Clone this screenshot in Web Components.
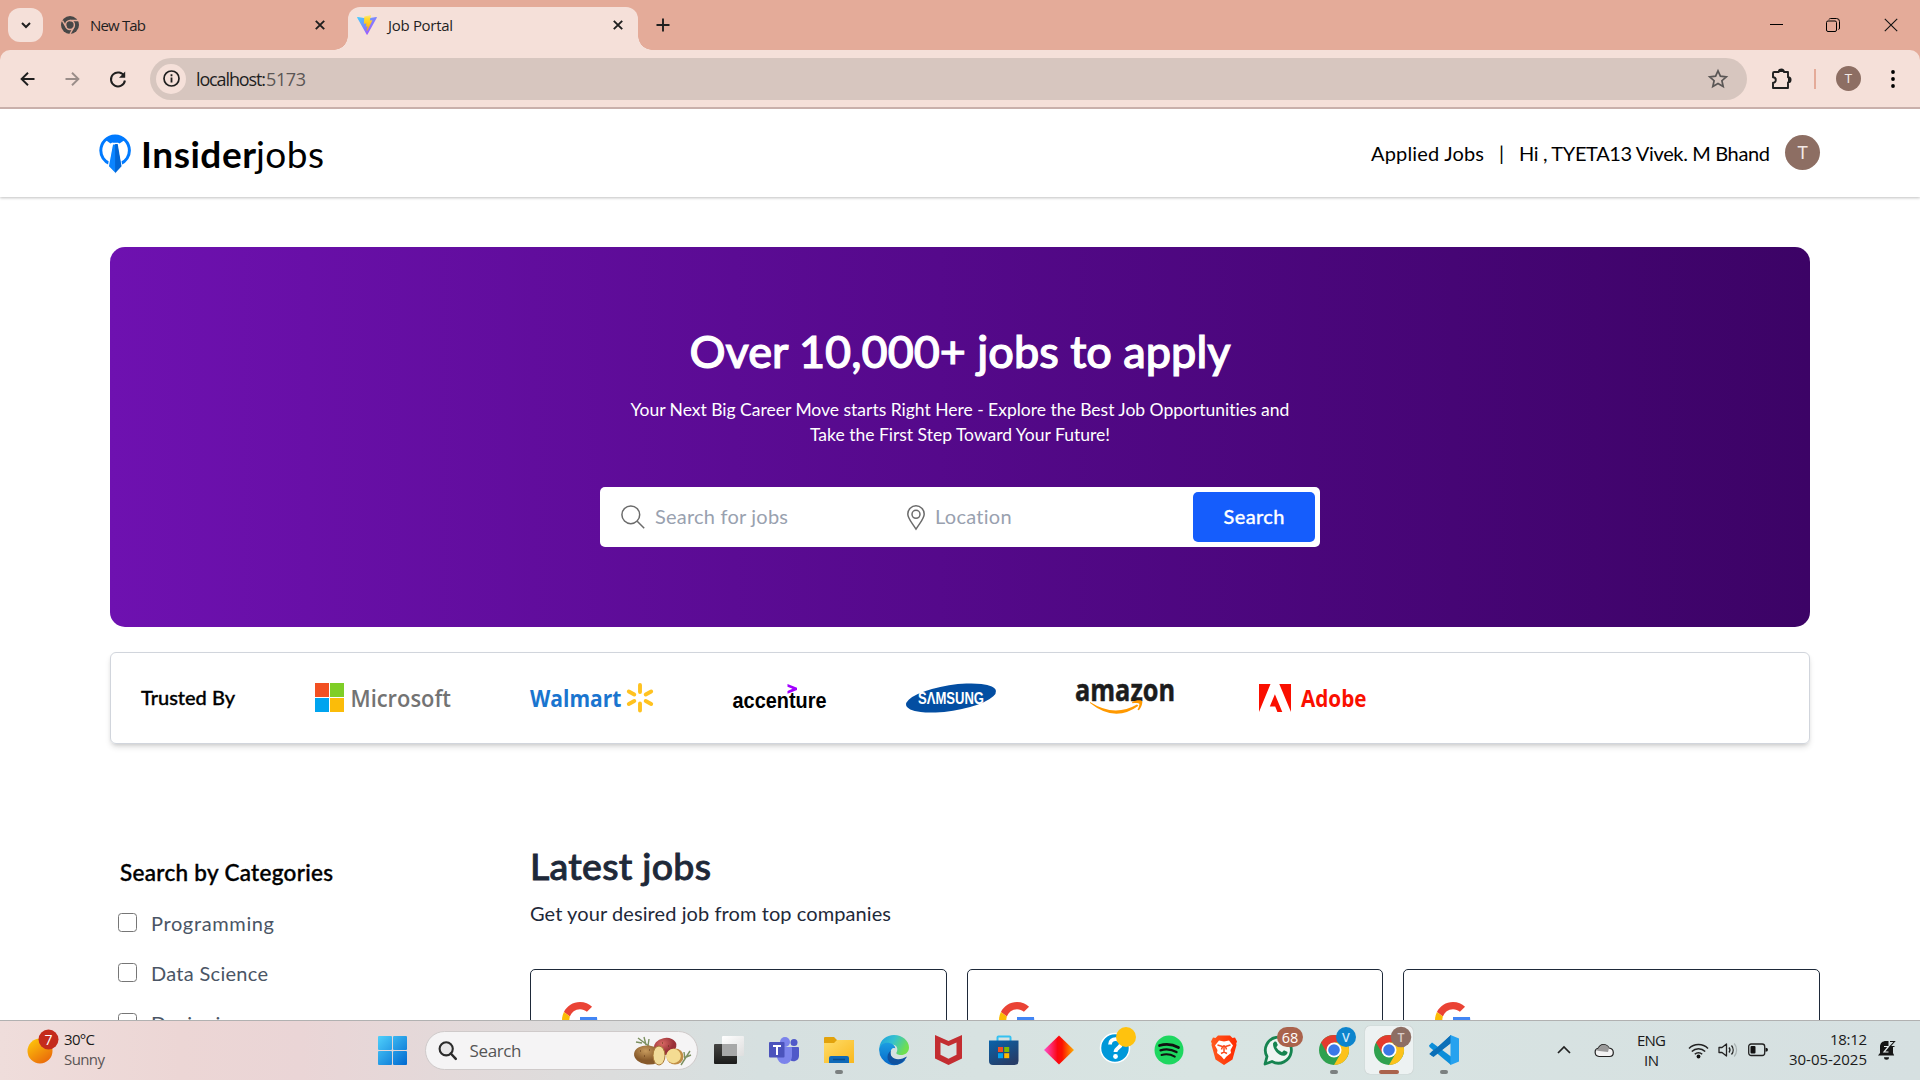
<!DOCTYPE html>
<html lang="en">
<head>
<meta charset="utf-8">
<title>Job Portal</title>
<style>
html,body{margin:0;padding:0}
body{width:1920px;height:1080px;overflow:hidden;display:flex;flex-direction:column;background:#fff;font-family:Lato,"Liberation Sans",sans-serif;font-size:20px;color:#000}
</style>
</head>
<body>
<browser-chrome></browser-chrome>
<portal-page></portal-page>
<task-bar></task-bar>
<script>
const ICONS = {
chevron:[10,6,'<path d="M1 1l4 4 4-4" fill="none" stroke="#1f1f1f" stroke-width="2"/>'],
chromeGrey:[18,18,'<circle cx="9" cy="9" r="9" fill="#474747"/><circle cx="9" cy="9" r="4.4" fill="none" stroke="#e4ab99" stroke-width="1.5"/><path d="M9 4.6h8M5.2 11.2L1.4 4.6M12.8 11.2L9 18" stroke="#e4ab99" stroke-width="1.5"/>'],
x:[10,10,'<path d="M.8.8l8.4 8.4M9.200.8L.8 9.200" stroke="#1f1f1f" stroke-width="1.900"/>'],
vite:[20,20,'<defs><linearGradient id="a" x1="0" y1="0" x2="1" y2="1"><stop offset="0" stop-color="#41d1ff"/><stop offset="1" stop-color="#bd34fe"/></linearGradient><linearGradient id="b" x1="0" y1="0" x2="0" y2="1"><stop offset="0" stop-color="#ffea83"/><stop offset=".2" stop-color="#ffdd35"/><stop offset="1" stop-color="#ffa800"/></linearGradient></defs><path d="M19.800 2.800L10.500 19.500c-.2.350-.7.350-.9 0L.2 2.800c-.2-.4.1-.9.600-.8L10 3.600l9.200-1.600c.5-.1.800.4.600.8z" fill="url(#a)"/><path d="M14 .1L7.500 1.400c-.1 0-.2.1-.2.2l-.4 6.900c0 .2.1.3.300.3l1.900-.4c.2 0 .3.100.3.300l-.6 2.700c0 .2.200.4.300.3l1.200-.4c.2 0 .4.100.3.300l-.9 4.200c0 .3.300.4.400.2l5.200-10.500c.1-.2-.1-.4-.3-.3l-1.900.4c-.2 0-.3-.1-.3-.3L14 .5z" fill="url(#b)"/>'],
plus:[14,14,'<path d="M7 .5v13M.5 7h13" stroke="#1f1f1f" stroke-width="1.900"/>'],
min:[13,14,'<path d="M0 6.500h13" stroke="#000" stroke-width="1"/>'],
restore:[14,14,'<rect x=".5" y="3" width="10" height="10.500" rx="1.500" fill="none" stroke="#000"/><path d="M3 1.500Q3.300.5 4.500.5H10.500Q13.500.5 13.500 3.500V10Q13.500 11.300 12.500 11.500" fill="none" stroke="#000"/>'],
close:[14,14,'<path d="M.8.8l12.400 12.400M13.200.8L.8 13.200" stroke="#111" stroke-width="1.100"/>'],
back:[15,14,'<path d="M14.500 7H1.500M8 .7L1.600 7 8 13.300" fill="none" stroke="#1f1f1f" stroke-width="1.900"/>'],
fwd:[15,14,'<path d="M.5 7h13M7 .7L13.400 7 7 13.300" fill="none" stroke="#9a8d89" stroke-width="1.900"/>'],
reload:[16,16,'<path d="M14.300 5.400A7 7 0 1 0 14.900 9.500" fill="none" stroke="#1f1f1f" stroke-width="2"/><path d="M15.200.5v6.200H9z" fill="#1f1f1f"/>'],
info:[17,17,'<circle cx="8.500" cy="8.500" r="7.500" fill="none" stroke="#1f1f1f" stroke-width="1.700"/><path d="M8.500 7.500v5M8.500 4.300v1.900" stroke="#1f1f1f" stroke-width="1.800"/>'],
star:[20,19,'<path d="M10 1.800l2.400 5.400 5.900.6-4.400 3.900 1.300 5.800L10 14.500l-5.200 3 1.300-5.800L1.700 7.800l5.900-.6z" fill="none" stroke="#5a5655" stroke-width="1.700"/>'],
puzzle:[22,22,'<path d="M3.200 4h4.500a2.600 2.600 0 0 1 5.200 0H17v5.200a2.600 2.600 0 0 1 0 5.200V20H2V14.800a2.800 2.800 0 0 0 0-5.600V5.200Q2 4 3.200 4z" fill="none" stroke="#1f1f1f" stroke-width="1.900" stroke-linejoin="round"/><path d="M7.700 4a2.600 2.600 0 0 1 5.200 0zM17 9.200a2.600 2.600 0 0 1 0 5.200z" fill="#1f1f1f"/>'],
dots:[4,20,'<circle cx="2" cy="3" r="1.900"/><circle cx="2" cy="10" r="1.900"/><circle cx="2" cy="17" r="1.900"/>'],
logo:[32,40,'<path d="M10.500 29.500C5 27.500 1.800 22 1.800 16.500a14.300 14.500 0 0 1 28.600 0c0 5.500-3.200 11-8.700 13" fill="none" stroke="#007aff" stroke-width="3"/><path d="M6 5.500Q16-3.500 26.500 5.500L20.500 9.500 16 7l-4.500 2.500z" fill="#007aff"/><path d="M11.200 3.500h9.800l-2.500 5.300h-4.800z" fill="#007aff"/><path d="M13.500 10h5.200l4.200 22.500L16.100 39.500 9.300 32.500z" fill="#0a84ff" stroke="#fff" stroke-width="1.200"/><path d="M16.100 10h2.600l3.800 22.200-6.400 7z" fill="#0066d6"/>'],
search:[24,24,'<circle cx="9.800" cy="9.800" r="8.900" fill="none" stroke="#6b6b6b" stroke-width="1.500"/><path d="M16.200 16.200l7 7" stroke="#6b6b6b" stroke-width="1.500"/>'],
pin:[18,25,'<path d="M9 .8A8.200 8.200 0 0 0 .8 9c0 4.500 4 8.500 8.200 15.200C13.200 17.500 17.200 13.500 17.200 9A8.200 8.200 0 0 0 9 .8z" fill="none" stroke="#6b6b6b" stroke-width="1.500"/><circle cx="9" cy="9.300" r="4" fill="none" stroke="#6b6b6b" stroke-width="1.500"/>'],
microsoft:[136,30,'<path d="M0 0h14v14H0z" fill="#f25022"/><path d="M15 0h14v14H15z" fill="#7fce27"/><path d="M0 15h14v14H0z" fill="#00a4ef"/><path d="M15 15h14v14H15z" fill="#fbbc09"/><text x="35.500" y="23.500" textLength="100.500" lengthAdjust="spacingAndGlyphs" font-family="Open Sans" font-weight="600" font-size="24" fill="#737373">Microsoft</text>'],
walmart:[124,30,'<text x="0" y="23.500" textLength="91.500" lengthAdjust="spacingAndGlyphs" font-family="Open Sans" font-weight="700" font-size="24" fill="#1a75cf">Walmart</text><g stroke="#ffc220" stroke-width="3.900" stroke-linecap="round"><path d="M110 2v7M110 20.500v7M98.800 8.500l5.500 3M121.200 8.500l-5.500 3M98.800 21l5.500-3M121.200 21l-5.500-3"/></g>'],
accenture:[95,30,'<text x="-.5" y="25" textLength="94" lengthAdjust="spacingAndGlyphs" font-family="Liberation Sans" font-weight="700" font-size="21.500">accenture</text><path d="M54.500 1l9.500 3.700v2.300l-9.500 3.700V7.900l5-2.100-5-2z" fill="#a100ff"/>'],
samsung:[92,30,'<ellipse cx="45" cy="15" rx="45.500" ry="12.800" transform="rotate(-9 45 15)" fill="#034ea2"/><text x="12" y="20.500" textLength="66" lengthAdjust="spacingAndGlyphs" font-family="Liberation Sans" font-weight="700" font-size="16" fill="#fff">SΛMSUNG</text>'],
amazon:[100,31,'<text x="-1" y="18" textLength="100" lengthAdjust="spacingAndGlyphs" font-family="Open Sans" font-weight="700" font-size="30" stroke="#1c1c1c" stroke-width=".5" fill="#1c1c1c">amazon</text><path d="M14 19Q38 34.500 61 21.500l1.500 1.300Q39 40 14 20z" fill="#ff9900"/><path d="M56 19c5-2.500 10-1.800 10.300-.6s-.8 6.500-3.500 8.800l-1.300-.5c1.500-3 2.200-5.300 1.800-6s-3-.9-6.900-.5z" fill="#ff9900"/>'],
adobe:[108,30,'<path d="M0 1h11.500L0 29zM32 1H20.300L32 29zM15.900 11.300L23.300 29h-4.900l-2.200-5.600h-5.400z" fill="#fa0f00"/><text x="42" y="23.500" textLength="65.500" lengthAdjust="spacingAndGlyphs" font-family="Open Sans" font-weight="700" font-size="23" fill="#fa0f00">Adobe</text>'],
google:[36,36,'<g transform="scale(.75)"><path fill="#EA4335" d="M24 9.500c3.540 0 6.710 1.220 9.210 3.600l6.850-6.850C35.900 2.380 30.470 0 24 0 14.620 0 6.510 5.380 2.560 13.220l7.980 6.190C12.430 13.720 17.740 9.500 24 9.500z"/><path fill="#4285F4" d="M46.980 24.550c0-1.570-.15-3.090-.38-4.550H24v9.020h12.940c-.58 2.960-2.260 5.480-4.780 7.180l7.730 6c4.510-4.180 7.090-10.360 7.090-17.650z"/><path fill="#FBBC05" d="M10.530 28.590c-.48-1.450-.76-2.990-.76-4.590s.27-3.140.76-4.590l-7.980-6.190C.92 16.460 0 20.120 0 24c0 3.880.92 7.540 2.560 10.780z"/><path fill="#34A853" d="M24 48c6.480 0 11.930-2.130 15.890-5.810l-7.730-6c-2.150 1.450-4.920 2.300-8.160 2.300-6.260 0-11.570-4.220-13.470-9.910l-7.980 6.190C6.510 42.620 14.620 48 24 48z"/></g>'],
/* taskbar */
weather:[34,36,'<defs><linearGradient id="a" x1="0" y1="0" x2=".7" y2="1"><stop offset="0" stop-color="#ffce0a"/><stop offset="1" stop-color="#ea6a0a"/></linearGradient></defs><circle cx="13" cy="22" r="12.500" fill="url(#a)"/><circle cx="21.500" cy="10.500" r="10" fill="#c42b1c"/><text x="21.500" y="15.500" font-size="14" text-anchor="middle" fill="#fff" font-family="Open Sans">7</text>'],
win:[29,29,'<defs><linearGradient id="a" gradientUnits="userSpaceOnUse" x1="0" y1="0" x2="29" y2="29"><stop offset="0" stop-color="#4fd0fb"/><stop offset="1" stop-color="#0069d0"/></linearGradient></defs><g fill="url(#a)"><rect width="14" height="14" rx="1"/><rect x="15" width="14" height="14" rx="1"/><rect y="15" width="14" height="14" rx="1"/><rect x="15" y="15" width="14" height="14" rx="1"/></g>'],
find:[19,19,'<circle cx="8.200" cy="7.800" r="6.600" fill="rgba(0,0,0,.05)" stroke="#2b2b2b" stroke-width="2.100"/><path d="M12.800 12.500l5 5.300" stroke="#2b2b2b" stroke-width="2.500" stroke-linecap="round"/>'],
potato:[58,30,'<defs><radialGradient id="a" cx=".4" cy=".3"><stop offset="0" stop-color="#d96a64"/><stop offset="1" stop-color="#9a3038"/></radialGradient><radialGradient id="b" cx=".4" cy=".3"><stop offset="0" stop-color="#c79a5c"/><stop offset="1" stop-color="#87592a"/></radialGradient></defs><path d="M4 2l12 9M8 7l-6-1M10 1l2 8M15 3l-1 7M56 15l-9 14M57 19l-7 3M50 16l1 7" stroke="#7c9060" stroke-width="1.400" fill="none"/><ellipse cx="31" cy="10.500" rx="11.500" ry="8.500" fill="url(#a)" transform="rotate(-12 31 10)"/><ellipse cx="14" cy="19" rx="14" ry="9.500" fill="url(#b)" transform="rotate(6 14 19)"/><ellipse cx="25" cy="19.500" rx="6" ry="9.500" fill="#f2dc9a" stroke="#a87838"/><ellipse cx="41" cy="20.500" rx="8.500" ry="8" fill="#c08d45"/><ellipse cx="39.500" cy="20" rx="7.300" ry="7.200" fill="#f4dc92"/><path d="M6 15h1M10 20h1M15 14h1M28 7h1M34 10h1" stroke="#5c3517"/>'],
taskview:[30,30,'<defs><linearGradient id="a" x1="0" y1="0" x2="0" y2="1"><stop offset="0" stop-color="#454543"/><stop offset="1" stop-color="#1c1c1b"/></linearGradient><linearGradient id="b" x1="0" x2="1" y2="1"><stop offset="0" stop-color="#fff"/><stop offset="1" stop-color="#dedede"/></linearGradient></defs><rect y="9" width="23" height="20" rx="1" fill="url(#a)"/><rect x="8" y="1" width="22" height="20" rx="1" fill="url(#b)"/><rect x="8" y="9" width="15" height="12" fill="#a7a8a8"/>'],
teams:[30,30,'<circle cx="25" cy="7.500" r="3.500" fill="#5059c9"/><circle cx="16" cy="7" r="5" fill="#7b83eb"/><path d="M19 12h10q1 0 1 1v8a5.500 5.500 0 0 1-9 4z" fill="#5059c9"/><path d="M8 12h14q1 0 1 1v8.500a7.500 7.500 0 0 1-15 0z" fill="#7b83eb"/><rect y="7" width="15.500" height="15.500" rx="1" fill="#4b53bc"/><path d="M4 11h8M8 11v9" stroke="#fff" stroke-width="2"/>'],
folder:[30,30,'<defs><linearGradient id="a" x1="0" y1="0" x2="1" y2="1"><stop offset="0" stop-color="#ffdc68"/><stop offset="1" stop-color="#f9b81e"/></linearGradient></defs><path d="M0 3q0-1 1-1h9l3 3h16q1 0 1 1v10H0z" fill="#e2a20c"/><path d="M0 8h10l3-3h16q1 0 1 1v22H0z" fill="url(#a)"/><path d="M5 28v-5q0-2 2-2h16q2 0 2 2v5z" fill="#0f6ab8"/><path d="M9 24.500h12" stroke="#084d8c" stroke-width="1.500"/>'],
edge:[30,30,'<defs><linearGradient id="a" x1="0" y1="0" x2="1" y2=".4"><stop offset="0" stop-color="#1b9de2"/><stop offset=".5" stop-color="#35c1cf"/><stop offset="1" stop-color="#6fdf4f"/></linearGradient><linearGradient id="b" x1="0" y1="0" x2="0" y2="1"><stop offset="0" stop-color="#1b9de2"/><stop offset="1" stop-color="#0668c9"/></linearGradient></defs><path d="M.3 13C1 5 7.500 0 15 0c8.500 0 15 6 15 12.500 0 5-4 7.500-8 7.500-3 0-5.200-1-4.500-2.500 2-3.500.5-8-5-8C6 9.500 1 12 .3 17z" fill="url(#a)"/><path d="M.2 15C1 9 6 7 11 8.200c3.500.7 5.500 3.300 5.200 5.300-2-1.500-4.700.5-4.700 4.500 0 6 6 9.500 15 7A15 15 0 0 1 .2 15z" fill="url(#b)"/><path d="M11.800 15.500c-1.500 5 2.500 9 7.700 8.700 3 0 5.500-1 8.500-2.600-2 4-6.500 7.900-11.500 8.200C8 29.500 6 20 11.800 15.500z" fill="#10529f"/>'],
mcafee:[27,30,'<path d="M0 0l13.500 6L27 0v23.500L13.500 30 0 23.500z" fill="#c32d31"/><path d="M5.500 7.500L13.500 11l8-3.500v12.300l-8 4-8-4z" fill="#d9e2e2"/>'],
store:[30,30,'<defs><linearGradient id="a" x1="0" y1="0" x2=".6" y2="1"><stop offset="0" stop-color="#0963ab"/><stop offset="1" stop-color="#263d68"/></linearGradient></defs><path d="M8.500 7V2.500q0-1 1-1h11q1 0 1 1V7" fill="none" stroke="#35c1f1" stroke-width="2"/><path d="M0 5.500h29.500V26q0 4-4 4H4q-4 0-4-4z" fill="url(#a)"/><path d="M9 12h5v5H9z" fill="#f25022"/><path d="M15.200 12h5v5h-5z" fill="#7fba00"/><path d="M9 18.200h5v5H9z" fill="#00a4ef"/><path d="M15.200 18.200h5v5h-5z" fill="#ffb900"/>'],
diamond:[30,30,'<defs><linearGradient id="a"><stop offset="0" stop-color="#ff4fd0"/><stop offset=".45" stop-color="#fb0712"/><stop offset=".6" stop-color="#fb1200"/><stop offset="1" stop-color="#ffb000"/></linearGradient></defs><path d="M15 .5l15 14.500L15 29.500 0 15z" fill="url(#a)"/>'],
help:[38,38,'<circle cx="16" cy="21" r="14.500" fill="#0098d9" stroke="#fff" stroke-width="1.500"/><path d="M11 17.500c0-7 11-7 11-.8 0 4-5.500 4-5.500 8.300" fill="none" stroke="#fff" stroke-width="3.800"/><circle cx="16.500" cy="29.500" r="2.400" fill="#fff"/><circle cx="27" cy="10" r="10" fill="#ffc20e"/>'],
spotify:[30,30,'<circle cx="15" cy="15" r="14.500" fill="#1ed760"/><path d="M5.500 10.500q10-3 19 2" fill="none" stroke="#111" stroke-width="2.700" stroke-linecap="round"/><path d="M6.500 15.300q8.500-2.500 16 1.800" fill="none" stroke="#111" stroke-width="2.300" stroke-linecap="round"/><path d="M7.500 20q7-2 13.300 1.600" fill="none" stroke="#111" stroke-width="2" stroke-linecap="round"/>'],
brave:[26,30,'<defs><linearGradient id="a"><stop offset="0" stop-color="#ff5a1f"/><stop offset="1" stop-color="#ff2a00"/></linearGradient></defs><path d="M7 .5h12l2.500 2.500 2.500-.5 2 4-.8 2L25.500 10l-4 14.500L13 30l-8.500-5.500L.5 10l.3-1.500-.8-2 2-4 2.500.5z" fill="url(#a)"/><path d="M8 5.500l5 1 5-1 4 5-2.500 4.500.5 3-4.500 3.500L13 24.500l-2.500-3L6 18l.5-3L4 10.500z" fill="#fff"/><path d="M6.500 10l5 1.500-1 3M19.500 10l-5 1.500 1 3M10 18.500l3-1.500 3 1.500M13 10v7" stroke="#fb4b1d" stroke-width="1.500" fill="none"/>'],
whatsapp:[40,38,'<path d="M2 37l2-7.500a13 13 0 1 1 5 5z" fill="#eef5f2" stroke="#168450" stroke-width="2.800" stroke-linejoin="round"/><path d="M10 16.500c1-2.500 3-2.500 3.500-1.500l1.300 3-1.500 2.200q2 3.800 5.700 5l2-2 3.200 1.600c1 .7-.3 3.500-3 4-5 .6-11.500-6-11.200-12.300z" fill="#168450"/><rect x="14" y="0" width="26" height="20" rx="10" fill="#aa634c"/><text x="27" y="15.500" font-size="14.500" text-anchor="middle" fill="#fff" font-family="Open Sans">68</text>'],
chromeV:[38,38,'CHROME<circle cx="27" cy="10" r="10" fill="#0c84cd"/><text x="27" y="14.500" font-size="12.500" text-anchor="middle" font-weight="600" fill="#cfe8fa" font-family="Open Sans">V</text>'],
chromeT:[38,38,'CHROME<circle cx="27" cy="10" r="10.300" fill="#8d6e63"/><text x="27" y="14.500" font-size="12.500" text-anchor="middle" font-weight="600" fill="#d9ccc8" font-family="Open Sans">T</text>'],
vscode:[30,30,'<path d="M22 0l-18 16.500-2.500 3 2 1.800L22 8z" fill="#0b78c4"/><path d="M0 10.500L3 7.500l19 14V30L.5 12z" fill="#0d8ed9"/><path d="M.2 19l3-3 5-3.500L22 0v8L4.500 22z" fill="#0a6fb8"/><path d="M21.500 0L30 3.500v23L21.500 30z" fill="#27a2ef"/>'],
up:[14,8,'<path d="M1 7l6-6 6 6" fill="none" stroke="#222" stroke-width="1.700"/>'],
cloud:[20,15,'<path d="M5 13.500a4.200 4.200 0 0 1-.5-8.300C6 1 12 0 15 5q4.200.5 4.300 4.400T15.500 13.500z" fill="#f3f3f3" stroke="#222" stroke-width="1.200"/><path d="M4.500 5.500C6 1 12 0 15 5l-1 4-9-1-3.500-1z" fill="#999"/>'],
wifi:[21,17,'<path d="M1 6.500a13.500 13.500 0 0 1 19 0M3.800 9.500a9.500 9.500 0 0 1 13.400 0M6.800 12.200a5.300 5.300 0 0 1 7.400 0" fill="none" stroke="#222" stroke-width="1.500"/><circle cx="10.500" cy="14.500" r="1.900" fill="#111"/>'],
volume:[20,16,'<path d="M1 5.500h3L8.500 2v12L4 10.500H1z" fill="none" stroke="#222" stroke-width="1.300" stroke-linejoin="round"/><path d="M11 5.500a4 4 0 0 1 0 5M13.500 3.500a7 7 0 0 1 0 9" fill="none" stroke="#222" stroke-width="1.300"/><path d="M16.200 1.500a10 10 0 0 1 0 13" fill="none" stroke="#aab3b3" stroke-width="1.200"/>'],
battery:[20,14,'<rect x=".7" y="1" width="16" height="11.500" rx="2.500" fill="none" stroke="#222" stroke-width="1.300"/><rect x="2.500" y="3" width="5" height="7.500" rx="1" fill="#111"/><path d="M17.500 4.800q2.500 0 2.500 2t-2.500 2z" fill="#111"/>'],
bell:[18,20,'<path d="M2 13V7C2 3 4.500 1 8 1h2.500v6H15v6l1.200 2.500H0z" fill="#161616"/><path d="M6 17.300h5a2.500 2.500 0 0 1-5 0z" fill="#161616"/><path d="M6 6.500h4.500L6 12h4.500" fill="none" stroke="#e8eeee" stroke-width="1.200"/><path d="M12 1.500h4.500L12 6.500h4.500" fill="none" stroke="#161616" stroke-width="1.100"/>']
};
const CHROME='<circle cx="15" cy="23" r="15" fill="#2fa14f"/><path d="M15 23L2.010 15.500A15 15 0 0 1 28 15.500H15z" fill="#e33b2e"/><path d="M15 23V15.500H28A15 15 0 0 1 15 38l6.500-11.250z" fill="#fcc21b"/><path d="M8.500 26.750L2.010 15.500 15 15.500z" fill="#e33b2e"/><circle cx="15" cy="23" r="7.500" fill="#fff"/><circle cx="15" cy="23" r="5.800" fill="#3b78e7"/>';

function define(name, markup){
  customElements.define(name, class extends HTMLElement{
    constructor(){ super(); this.attachShadow({mode:'open'}).innerHTML = markup; }
  });
}

customElements.define('ui-icon', class extends HTMLElement{
  connectedCallback(){
    if(this.shadowRoot) return;
    const [w,h,body]=ICONS[this.getAttribute('name')];
    this.attachShadow({mode:'open'}).innerHTML=`<style>:host{display:block;flex:none;width:${w}px;height:${h}px}svg{display:block;overflow:visible}</style><svg width="${w}" height="${h}" viewBox="0 0 ${w} ${h}">${body.replace('CHROME',CHROME)}</svg>`;
  }
});

define('round-avatar','<style>:host{display:flex;flex:none;align-items:center;justify-content:center;border-radius:50%;background:#8d6e63;color:#f3e9e6;font-family:Roboto,sans-serif}</style><slot></slot>');

define('browser-chrome',`<style>
:host{display:block;flex:none;height:109px;background:#e4ab99;font-family:"Open Sans",sans-serif;color:#1f1f1f;box-sizing:border-box}
.tabs{display:flex;height:50px;align-items:center}
.menu{width:35px;height:34px;border-radius:12px;background:#f5e0d9;margin-left:8px;display:flex;align-items:center;justify-content:center}
.tab{display:flex;align-items:center;font-size:15px}
.t1{width:287px;margin-left:18px}
.t2{box-sizing:border-box;width:290px;height:43px;margin:7px 0 0;background:#f5e0d9;border-radius:12px 12px 0 0;padding:0 15px 7px 9px;position:relative}
.t2:before,.t2:after{content:"";position:absolute;bottom:0;width:14px;height:14px}
.t2:before{left:-14px;background:radial-gradient(circle at 0 0,transparent 13.500px,#f5e0d9 14px)}
.t2:after{right:-14px;background:radial-gradient(circle at 100% 0,transparent 13.500px,#f5e0d9 14px)}
.grow{flex:1}
.bar{box-sizing:border-box;height:59px;background:#f5e0d9;border-bottom:2px solid #c9b0ab;border-radius:10px 10px 0 0;display:flex;align-items:center;padding:0 25px 0 20px}
.omni{height:42px;width:1597px;border-radius:21px;background:#d7c6bf;display:flex;align-items:center;box-sizing:border-box;padding:0 19px 0 6px;font-size:18px}
.info{width:30px;height:30px;border-radius:50%;background:#f5e0d9;display:flex;align-items:center;justify-content:center;margin-right:10px}
.port{color:#5b5655}
.sep{width:2px;height:20px;background:#e4ab99;margin:0 20px 0 21px}
round-avatar{width:25px;height:25px;font-size:13px}
</style>
<div class="tabs"><div class="menu"><ui-icon name="chevron"></ui-icon></div>
<div class="tab t1"><ui-icon name="chromeGrey"></ui-icon><fit-text w="56" style="margin-left:11px">New Tab</fit-text><ui-icon name="x" style="margin-left:169px"></ui-icon></div>
<div class="tab t2"><ui-icon name="vite"></ui-icon><fit-text w="65" style="margin-left:11px">Job Portal</fit-text><span class="grow"></span><ui-icon name="x"></ui-icon></div>
<ui-icon name="plus" style="margin-left:18px"></ui-icon><span class="grow"></span>
<ui-icon name="min"></ui-icon><ui-icon name="restore" style="margin-left:43px"></ui-icon><ui-icon name="close" style="margin:0 22px 0 44px"></ui-icon></div>
<div class="bar"><ui-icon name="back"></ui-icon><ui-icon name="fwd" style="margin-left:30px"></ui-icon><ui-icon name="reload" style="margin-left:30px"></ui-icon>
<div class="omni" style="margin-left:24px"><div class="info"><ui-icon name="info"></ui-icon></div><fit-text w="70">localhost:</fit-text><fit-text w="40" class="port">5173</fit-text><span class="grow"></span><ui-icon name="star"></ui-icon></div>
<ui-icon name="puzzle" style="margin-left:24px"></ui-icon><span class="sep"></span><round-avatar>T</round-avatar><span class="grow"></span><ui-icon name="dots"></ui-icon></div>`);

define('portal-header',`<style>
:host{display:flex;flex:none;box-sizing:border-box;height:88px;align-items:center;padding:0 100px 1px 99px;box-shadow:0 1px 3px rgba(0,0,0,.2),0 1px 2px rgba(0,0,0,.06);line-height:30px}
.name{font-size:37px;display:flex;margin:3px 0 0 10px;line-height:44px}
b{font-weight:700}
.grow{flex:1}
.bar{margin:0 17px 0 15px}
round-avatar{width:35px;height:35px;font-size:18px;margin-left:15px}
</style><ui-icon name="logo" style="margin-top:2px"></ui-icon><div class="name"><fit-text w="115"><b>Insider</b></fit-text><fit-text w="68">jobs</fit-text></div><span class="grow"></span>
<fit-text w="113">Applied Jobs</fit-text><fit-text w="3" class="bar">|</fit-text><fit-text w="251">Hi , TYETA13 Vivek. M Bhand</fit-text><round-avatar>T</round-avatar>`);

define('search-box',`<style>
:host{display:flex;box-sizing:border-box;width:720px;height:60px;border-radius:5px;background:#fff;align-items:center;padding:0 5px 0 21px;color:#99a1af}
.field{display:flex;align-items:center;gap:10px}
.what{width:286px}.where{flex:1}
fit-text{margin-top:-2px}
button{all:unset;box-sizing:border-box;width:122px;height:50px;border-radius:5px;background:#155dfc;color:#fff;text-align:center;display:flex;justify-content:center;align-items:center;font-weight:500;-webkit-text-stroke:.3px currentColor}
</style><div class="field what"><ui-icon name="search"></ui-icon><fit-text w="133">Search for jobs</fit-text></div><div class="field where"><ui-icon name="pin"></ui-icon><fit-text w="77">Location</fit-text></div><button><fit-text w="61">Search</fit-text></button>`);

define('hero-banner',`<style>
:host{display:flex;flex:none;flex-direction:column;align-items:center;box-sizing:border-box;height:380px;margin:50px 110px 0;padding-top:79px;border-radius:15px;background:linear-gradient(to right in oklab,#6e11b0,#3c0366);color:#fff}
h1{margin:0;font-size:45px;line-height:50px;font-weight:500;-webkit-text-stroke:1.100px currentColor}
p{margin:21px 0 40px;font-size:17.500px;line-height:25px;display:flex;flex-direction:column;align-items:center}
</style><h1><fit-text w="541">Over 10,000+ jobs to apply</fit-text></h1><p><fit-text w="659">Your Next Big Career Move starts Right Here - Explore the Best Job Opportunities and</fit-text><fit-text w="300">Take the First Step Toward Your Future!</fit-text></p><search-box></search-box>`);

define('trusted-by',`<style>
:host{display:flex;flex:none;align-items:center;box-sizing:border-box;height:92px;margin:25px 110px 0;padding:0 30px;border:1px solid #d1d5dc;border-radius:6px;box-shadow:0 4px 6px -1px rgba(0,0,0,.13),0 2px 4px -2px rgba(0,0,0,.15);font-weight:500}
.label{margin-top:-2px;-webkit-text-stroke:.35px currentColor}
</style><fit-text class="label" w="94">Trusted By</fit-text>
<ui-icon name="microsoft" style="margin-left:80px"></ui-icon><ui-icon name="walmart" style="margin-left:79px"></ui-icon><ui-icon name="accenture" style="margin-left:79px"></ui-icon><ui-icon name="samsung" style="margin-left:78px"></ui-icon><ui-icon name="amazon" style="margin-left:78px"></ui-icon><ui-icon name="adobe" style="margin-left:83px"></ui-icon>`);

define('category-option',`<style>:host{display:flex;height:50px;align-items:center;gap:14px;color:#4a5565}
i{box-sizing:border-box;width:19px;height:19px;border:1.500px solid #767676;border-radius:3.500px;background:#fff;margin-top:-1px}</style><i></i><slot></slot>`);

define('job-card',`<style>:host{display:block;box-sizing:border-box;flex:1;height:340px;border:1px solid #1e2939;border-radius:5px;padding:32px 31px}</style><ui-icon name="google"></ui-icon>`);

define('portal-page',`<style>
:host{display:flex;flex-direction:column;flex:1;min-height:0;overflow:hidden;background:#fff}
main{display:flex;padding:99px 100px 0 118px;flex:none}
aside{width:412px;flex:none}
h4{margin:12px 0 7px 2px;font-size:22.500px;line-height:36px;font-weight:500;-webkit-text-stroke:.4px currentColor}
section{flex:1}
h3{margin:0;font-size:37.500px;line-height:45px;font-weight:500;color:#1e2939;-webkit-text-stroke:.9px currentColor}
p{margin:10px 0 41px;line-height:30px;color:#1e2939}
.cards{display:flex;gap:20px}
</style><portal-header></portal-header><hero-banner></hero-banner><trusted-by></trusted-by>
<main><aside><h4><fit-text w="213">Search by Categories</fit-text></h4>
<category-option><fit-text w="123">Programming</fit-text></category-option><category-option><fit-text w="117">Data Science</fit-text></category-option><category-option><fit-text w="92">Designing</fit-text></category-option></aside>
<section><h3><fit-text w="181">Latest jobs</fit-text></h3><p><fit-text w="361">Get your desired job from top companies</fit-text></p><div class="cards"><job-card></job-card><job-card></job-card><job-card></job-card></div></section></main>`);

define('task-item',`<style>:host{display:flex;flex:none;width:55.070px;height:59px;align-items:center;justify-content:center;position:relative}
:host([active]):before{content:"";position:absolute;left:3.500px;top:5px;width:48px;height:48px;border-radius:5px;background:#edf2f2;box-shadow:0 0 1px #aaa}
:host([open]):after{content:"";position:absolute;left:23.500px;top:49px;width:8px;height:4px;border-radius:2px;background:#7b8080}
:host([active]):after{left:17.500px;width:20px;background:#aa634c}
::slotted(*){position:relative;top:-.5px}
:host([badge]) ::slotted(*){left:4px;top:-4.500px}
</style><slot></slot>`);

define('task-bar',`<style>
:host{display:flex;flex:none;box-sizing:border-box;height:60px;border-top:1px solid #b1b1b1;align-items:center;font-family:"Open Sans",sans-serif;font-size:15px;line-height:20px;color:#1a1a1a;background:linear-gradient(90deg,#efdddb 0,#ecd6d5 180px,#ead5d6 300px,#dedcdc 560px,#d6e0e0 760px,#d8e4e2 1200px,#d6e0e1 1920px)}
.two{display:flex;flex-direction:column}
.dim{color:#5a5555}
.pill{box-sizing:border-box;width:273px;height:39px;border-radius:20px;background:#f5f4f5;border:1px solid #cfcaca;display:flex;align-items:center;padding:0 5px 0 12px;margin:0 3.500px 0 18px;font-size:17px;color:#555}
.grow{flex:1}
.r{align-items:flex-end}.c{align-items:center}
</style>
<ui-icon name="weather" style="margin:-8px 0 0 27px"></ui-icon><div class="two" style="margin:-3px 0 0 3px;width:313.500px"><fit-text w="31">30°C</fit-text><fit-text w="41" class="dim">Sunny</fit-text></div>
<ui-icon name="win"></ui-icon>
<div class="pill"><ui-icon name="find"></ui-icon><fit-text w="52" style="margin-left:13px">Search</fit-text><span class="grow"></span><ui-icon name="potato"></ui-icon></div>
<task-item><ui-icon name="taskview"></ui-icon></task-item><task-item><ui-icon name="teams"></ui-icon></task-item><task-item open><ui-icon name="folder"></ui-icon></task-item><task-item><ui-icon name="edge"></ui-icon></task-item><task-item><ui-icon name="mcafee"></ui-icon></task-item><task-item><ui-icon name="store"></ui-icon></task-item><task-item><ui-icon name="diamond"></ui-icon></task-item><task-item badge><ui-icon name="help"></ui-icon></task-item><task-item><ui-icon name="spotify"></ui-icon></task-item><task-item><ui-icon name="brave"></ui-icon></task-item><task-item badge><ui-icon name="whatsapp"></ui-icon></task-item><task-item badge open><ui-icon name="chromeV"></ui-icon></task-item><task-item badge open active><ui-icon name="chromeT"></ui-icon></task-item><task-item open><ui-icon name="vscode"></ui-icon></task-item>
<span class="grow"></span>
<ui-icon name="up" style="margin-top:-1px"></ui-icon><ui-icon name="cloud" style="margin:-1px 0 0 23px"></ui-icon>
<div class="two c" style="margin:-2px 0 0 23px"><fit-text w="29">ENG</fit-text><fit-text w="15">IN</fit-text></div>
<ui-icon name="wifi" style="margin:-1px 0 0 22px"></ui-icon><ui-icon name="volume" style="margin:-1px 0 0 9px"></ui-icon><ui-icon name="battery" style="margin:-1px 0 0 10px"></ui-icon>
<div class="two r" style="margin:-3px 11px 0 21px"><fit-text w="37">18:12</fit-text><fit-text w="78">30-05-2025</fit-text></div><ui-icon name="bell" style="margin:-1px 24px 0 0"></ui-icon>`);

/* Label whose letter-spacing is tuned so that the text spans the width given in "w". */
customElements.define('fit-text', class extends HTMLElement{
  connectedCallback(){
    if(this.shadowRoot) return;
    const w=+this.getAttribute('w');
    this.attachShadow({mode:'open'}).innerHTML=`<style>:host{display:block;flex:none;width:${w}px;white-space:nowrap;text-align:left}span{display:inline-block}</style><span><slot></slot></span>`;
    const s=this.shadowRoot.querySelector('span'), n=this.textContent.length;
    if(n>1) s.style.letterSpacing=((w-s.getBoundingClientRect().width)/(n-1))+'px';
  }
});
</script>
</body>
</html>
